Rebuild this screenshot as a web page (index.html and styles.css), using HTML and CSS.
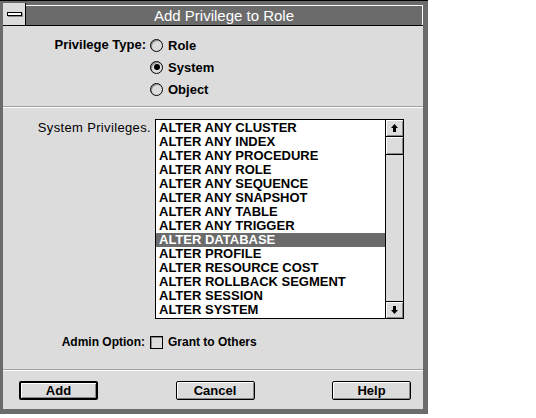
FILE: index.html
```html
<!DOCTYPE html>
<html>
<head>
<meta charset="utf-8">
<title>Add Privilege to Role</title>
<link rel="stylesheet" href="styles.css">
</head>
<body>
<div class="window">
  <div class="titlebar">
    <div class="sysmenu"><span class="dash"></span></div>
    <div class="title">Add Privilege to Role</div>
  </div>
  <div class="client">
    <div class="row type-row">
      <div class="label type-label">Privilege Type:</div>
      <div class="radios">
        <div class="radio"><span class="circle"></span><span class="opt">Role</span></div>
        <div class="radio checked"><span class="circle"></span><span class="opt">System</span></div>
        <div class="radio"><span class="circle"></span><span class="opt">Object</span></div>
      </div>
    </div>
    <div class="sep sep-top"></div>
    <div class="row priv-row">
      <div class="label priv-label">System Privileges.</div>
      <div class="listbox">
        <ul class="items">
          <li>ALTER ANY CLUSTER</li>
          <li>ALTER ANY INDEX</li>
          <li>ALTER ANY PROCEDURE</li>
          <li>ALTER ANY ROLE</li>
          <li>ALTER ANY SEQUENCE</li>
          <li>ALTER ANY SNAPSHOT</li>
          <li>ALTER ANY TABLE</li>
          <li>ALTER ANY TRIGGER</li>
          <li class="selected">ALTER DATABASE</li>
          <li>ALTER PROFILE</li>
          <li>ALTER RESOURCE COST</li>
          <li>ALTER ROLLBACK SEGMENT</li>
          <li>ALTER SESSION</li>
          <li>ALTER SYSTEM</li>
        </ul>
        <div class="scrollbar">
          <div class="sb-btn sb-up"><svg width="7" height="8" viewBox="0 0 7 8"><polygon points="3.5,0 7,4 5,4 5,8 2,8 2,4 0,4" fill="#000"/></svg></div>
          <div class="sb-thumb"></div>
          <div class="sb-track"></div>
          <div class="sb-btn sb-down"><svg width="7" height="8" viewBox="0 0 7 8"><polygon points="3.5,8 7,4 5,4 5,0 2,0 2,4 0,4" fill="#000"/></svg></div>
        </div>
      </div>
    </div>
    <div class="row admin-row">
      <div class="label admin-label">Admin Option:</div>
      <div class="check"><span class="box"></span><span class="opt">Grant to Others</span></div>
    </div>
    <div class="sep sep-bottom"></div>
    <div class="buttons">
      <button class="btn default">Add</button>
      <button class="btn">Cancel</button>
      <button class="btn">Help</button>
    </div>
  </div>
</div>
</body>
</html>
```
FILE: styles.css
```css
html, body {
  margin: 0;
  padding: 0;
  background: #ffffff;
}

body {
  font-family: "Liberation Sans", Arial, sans-serif;
  font-size: 13px;
  font-weight: bold;
  color: #000;
}

.window {
  width: 428px;
  height: 414px;
  box-sizing: border-box;
  background: #6b6b6b;
  border-top: 1px solid #000;
  padding: 2px 5px 5px 3px;
  display: flex;
  flex-direction: column;
}

.titlebar {
  display: flex;
  height: 23px;
  box-sizing: border-box;
  border-bottom: 1px solid #000;
}

.sysmenu {
  width: 22px;
  background: #dcdcdc;
  border-right: 1px solid #000;
  display: flex;
  align-items: center;
  justify-content: center;
}

.dash {
  display: block;
  width: 13px;
  height: 2px;
  background: #fff;
  border: 1px solid #000;
  box-shadow: 1px 1px 0 #8a8a8a;
}

.title {
  flex: 1;
  background: #6b6b6b;
  border-top: 1px solid #fff;
  border-right: 1px solid #fff;
  margin-top: 2px;
  color: #fff;
  font-weight: normal;
  font-size: 15px;
  text-align: center;
  line-height: 19px;
}

.client {
  flex: 1;
  background: #dcdcdc;
  display: flex;
  flex-direction: column;
}

.row {
  display: flex;
}

.label {
  text-align: right;
  box-sizing: border-box;
}

.type-row {
  padding-top: 8px;
}

.type-label {
  width: 143px;
  line-height: 22px;
}

.radios {
  margin-left: 4px;
  display: flex;
  flex-direction: column;
}

.radio {
  height: 22px;
  display: flex;
  align-items: center;
}

.circle {
  width: 13px;
  height: 13px;
  box-sizing: border-box;
  border: 1px solid #000;
  border-radius: 50%;
  position: relative;
  box-shadow: inset 1px 1px 0 #8a8a8a;
}

.radio.checked .circle::after {
  content: "";
  position: absolute;
  left: 2.5px;
  top: 2.5px;
  width: 6px;
  height: 6px;
  border-radius: 50%;
  background: #000;
}

.opt {
  margin-left: 5px;
}

.sep {
  height: 1px;
  background: #a0a0a0;
  border-bottom: 1px solid #fff;
}

.sep-top {
  margin-top: 6px;
}

.priv-row {
  margin-top: 11px;
}

.priv-label {
  width: 148px;
  padding-top: 2px;
  line-height: 14px;
  font-weight: normal;
  letter-spacing: 0.35px;
}

.listbox {
  margin-left: 4px;
  width: 249px;
  height: 200px;
  box-sizing: border-box;
  border: 1px solid #000;
  background: #fff;
  display: flex;
}

.items {
  flex: 1;
  list-style: none;
  margin: 0;
  padding: 1px 0 0 0;
}

.items li {
  height: 14px;
  line-height: 14px;
  padding-left: 3px;
  white-space: nowrap;
  overflow: hidden;
}

.items li.selected {
  background: #6b6b6b;
  color: #fff;
}

.scrollbar {
  width: 17px;
  border-left: 1px solid #000;
  background: #dcdcdc;
  display: flex;
  flex-direction: column;
}

.sb-btn {
  height: 16px;
  display: flex;
  align-items: center;
  justify-content: center;
  background: #dcdcdc;
  box-shadow: inset 1px 1px 0 #fff, inset -1px -1px 0 #8a8a8a;
}

.sb-up {
  border-bottom: 1px solid #000;
}

.sb-down {
  border-top: 1px solid #000;
}

.sb-thumb {
  height: 17px;
  border-bottom: 1px solid #000;
  background: #dcdcdc;
  box-shadow: inset 1px 1px 0 #fff, inset -1px -1px 0 #8a8a8a;
}

.sb-track {
  flex: 1;
  background: #dcdcdc;
}

.admin-row {
  margin-top: 12px;
  height: 22px;
  align-items: center;
  font-size: 12px;
}

.admin-label {
  width: 142px;
}

.check {
  margin-left: 5px;
  display: flex;
  align-items: center;
}

.box {
  width: 13px;
  height: 13px;
  box-sizing: border-box;
  border: 1px solid #000;
  box-shadow: inset 1px 1px 0 #8a8a8a;
}

.sep-bottom {
  margin-top: 16px;
}

.buttons {
  margin-top: 10px;
  padding: 0 12px 0 16px;
  display: flex;
  justify-content: space-between;
}

.btn {
  width: 79px;
  height: 19px;
  box-sizing: border-box;
  font-family: "Liberation Sans", Arial, sans-serif;
  font-size: 13px;
  font-weight: bold;
  color: #000;
  background: #dcdcdc;
  border: 1px solid #000;
  border-radius: 2px;
  box-shadow: inset 1px 1px 0 #fff, inset -1px -1px 0 #8a8a8a;
  padding: 0;
  line-height: 15px;
}

.btn.default {
  border-width: 2px;
}
```
